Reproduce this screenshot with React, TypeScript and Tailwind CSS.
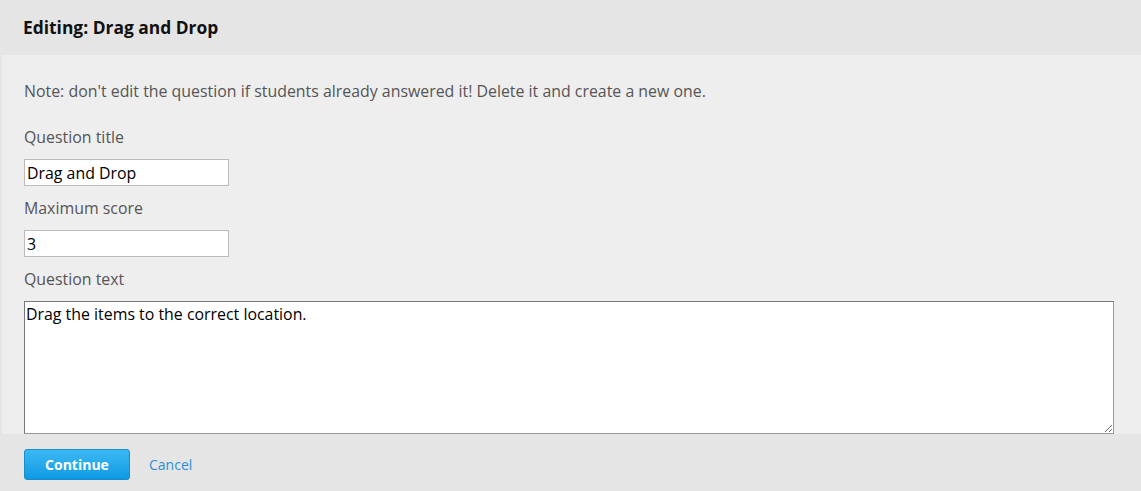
import React from 'react';

const font = { fontFamily: '"Open Sans", "Noto Sans", sans-serif' };

export default function App() {
  return (
    <div className="h-screen flex flex-col bg-[#e5e5e5] overflow-hidden" style={font}>
      {/* Header */}
      <div className="h-[55px] shrink-0 flex items-center px-[23px]">
        <h1 className="text-[17.4px] font-bold text-[#111]">Editing: Drag and Drop</h1>
      </div>

      {/* Body */}
      <div className="flex-1 min-h-0 ml-[2px] bg-[#eeeeee] pl-[22px] pr-[27px] pt-[26px] overflow-hidden">
        <p className="text-[15.9px] leading-[20px] text-[#555]">
          Note: don't edit the question if students already answered it! Delete it and create a new one.
        </p>

        <label className="block mt-[26px] text-[15.9px] leading-[20px] text-[#555]">Question title</label>
        <input
          className="block mt-[12px] w-[205px] h-[27px] border border-[#bbbbbb] bg-white px-[2px] text-[15.9px] text-black outline-none"
          defaultValue="Drag and Drop"
        />

        <label className="block mt-[12px] text-[15.9px] leading-[20px] text-[#555]">Maximum score</label>
        <input
          className="block mt-[12px] w-[205px] h-[27px] border border-[#bbbbbb] bg-white px-[2px] text-[15.9px] text-black outline-none"
          defaultValue="3"
        />

        <label className="block mt-[12px] text-[15.9px] leading-[20px] text-[#555]">Question text</label>
        <textarea
          className="block mt-[12px] w-full h-[133px] border border-[#999] border-t-[#777] border-l-[#777] bg-white px-[1px] py-[1px] text-[15.9px] leading-[22px] text-black outline-none"
          defaultValue="Drag the items to the correct location."
        />
      </div>

      {/* Footer */}
      <div className="h-[57px] shrink-0 flex items-start pt-[15px] pl-[24px]">
        <button className="w-[106px] h-[31px] rounded-[3px] border border-[#1a8ccc] bg-gradient-to-b from-[#3ab8f2] to-[#0a9ae4] text-white text-[14px] font-bold">
          Continue
        </button>
        <a href="#" className="ml-[19px] mt-[6px] text-[14px] leading-[20px] text-[#2a90d8]">Cancel</a>
      </div>
    </div>
  );
}
